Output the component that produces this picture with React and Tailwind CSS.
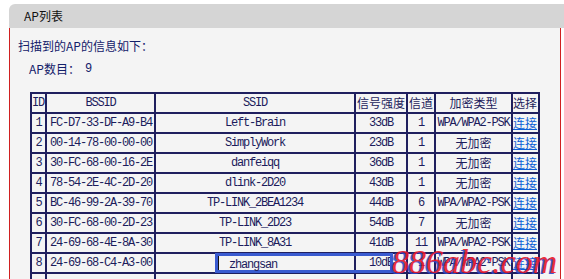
import React from "react";

const rows = [
  ["1", "FC-D7-33-DF-A9-B4", "Left-Brain", "33dB", "1", "WPA/WPA2-PSK"],
  ["2", "00-14-78-00-00-00", "SimplyWork", "23dB", "1", "无加密"],
  ["3", "30-FC-68-00-16-2E", "danfeiqq", "36dB", "1", "无加密"],
  ["4", "78-54-2E-4C-2D-20", "dlink-2D20", "43dB", "1", "无加密"],
  ["5", "BC-46-99-2A-39-70", "TP-LINK_2BEA1234", "44dB", "6", "WPA/WPA2-PSK"],
  ["6", "30-FC-68-00-2D-23", "TP-LINK_2D23", "54dB", "7", "无加密"],
  ["7", "24-69-68-4E-8A-30", "TP-LINK_8A31", "41dB", "11", "WPA/WPA2-PSK"],
  ["8", "24-69-68-C4-A3-00", "zhangsan", "10dB", "1", "WPA/WPA2-PSK"],
];

const cell =
  "border-r-2 border-b-2 border-[#1f1f5e] h-[20px] flex items-center whitespace-nowrap";
const mono =
  "font-['Liberation_Mono','Noto_Sans_CJK_SC',monospace] text-[12px] tracking-[-1.2px] leading-[18px]";
const cjk = "font-['Noto_Sans_CJK_SC',sans-serif] text-[12px] leading-[18px]";

function Enc({ v }) {
  if (v === "无加密") return <span className={cjk}>{v}</span>;
  return <span className={mono}>{v}</span>;
}

export default function App() {
  return (
    <div className="relative w-[564px] h-[279px] overflow-hidden bg-white text-[#1c1c5c]">
      <div className="pl-[9px] pt-[4px]">
        <div className="w-[555px] h-[24px] bg-[#d5d5d5] rounded-tl-[6px] flex items-center pl-[15px]">
          <span className="font-['Noto_Sans_CJK_SC',sans-serif] text-[12px] text-[#111] leading-[18px]">
            AP列表
          </span>
        </div>
        <div className="w-[552px] h-[300px] bg-[#f4f4f4] border-l border-r border-[#d02020] pt-[9px]">
          <div className="h-[18px] pl-[8px] flex items-center font-['Noto_Sans_CJK_SC',sans-serif] text-[12px] text-[#13206a]">
            扫描到的AP的信息如下：
          </div>
          <div className="h-[18px] mt-[5px] pl-[19px] flex items-center font-['Noto_Sans_CJK_SC',sans-serif] text-[12px] text-[#13206a]">
            <span>AP数目：</span>
            <span className="ml-[5px] font-['Liberation_Mono',monospace] text-[12px]">9</span>
          </div>
          <div className="mt-[14px] ml-[20px] w-[510px] grid grid-cols-[15px_109px_200px_52px_28px_77px_27px] border-l-2 border-t-2 border-[#1f1f5e]">
            <div className={`${cell} justify-start`}><span className={mono}>ID</span></div>
            <div className={`${cell} justify-center`}><span className={mono}>BSSID</span></div>
            <div className={`${cell} justify-center`}><span className={mono}>SSID</span></div>
            <div className={`${cell} justify-center`}><span className={cjk}>信号强度</span></div>
            <div className={`${cell} justify-center`}><span className={cjk}>信道</span></div>
            <div className={`${cell} justify-center`}><span className={cjk}>加密类型</span></div>
            <div className={`${cell} justify-start`}><span className={cjk}>选择</span></div>
            {rows.map((r) => (
              <React.Fragment key={r[0]}>
                <div className={`${cell} justify-center`}><span className={mono}>{r[0]}</span></div>
                <div className={`${cell} justify-start pl-[3px]`}><span className={mono}>{r[1]}</span></div>
                <div className={`${cell} justify-center relative`}>
                  {r[0] === "8" ? (
                    <div className="absolute left-[59px] top-[-1px] w-[178px] h-[20px] border-[3px] border-[#3a5bd0]">
                      <div className="h-full border-l border-[#111] pl-[10px] flex items-start">
                        <span className={`${mono} leading-[12px]`}>{r[2]}</span>
                      </div>
                    </div>
                  ) : (
                    <span className={mono}>{r[2]}</span>
                  )}
                </div>
                <div className={`${cell} justify-center`}><span className={mono}>{r[3]}</span></div>
                <div className={`${cell} justify-center`}><span className={mono}>{r[4]}</span></div>
                <div className={`${cell} justify-center`}><Enc v={r[5]} /></div>
                <div className={`${cell} justify-start`}>
                  <a href="#" className={`${cjk} text-[#0b5fd6] underline`}>连接</a>
                </div>
              </React.Fragment>
            ))}
            {[0, 1, 2, 3, 4, 5, 6].map((i) => (
              <div key={"e" + i} className={cell}>&nbsp;</div>
            ))}
          </div>
        </div>
      </div>
      <div
        className="absolute left-[392px] top-[245px] font-['Liberation_Serif',serif] italic text-[34px] leading-[34px] text-[#e8182c] opacity-90 whitespace-nowrap"
        style={{ textShadow: "-2px 1px 0 #3048c8" }}
      >
        886abc.com
      </div>
    </div>
  );
}
